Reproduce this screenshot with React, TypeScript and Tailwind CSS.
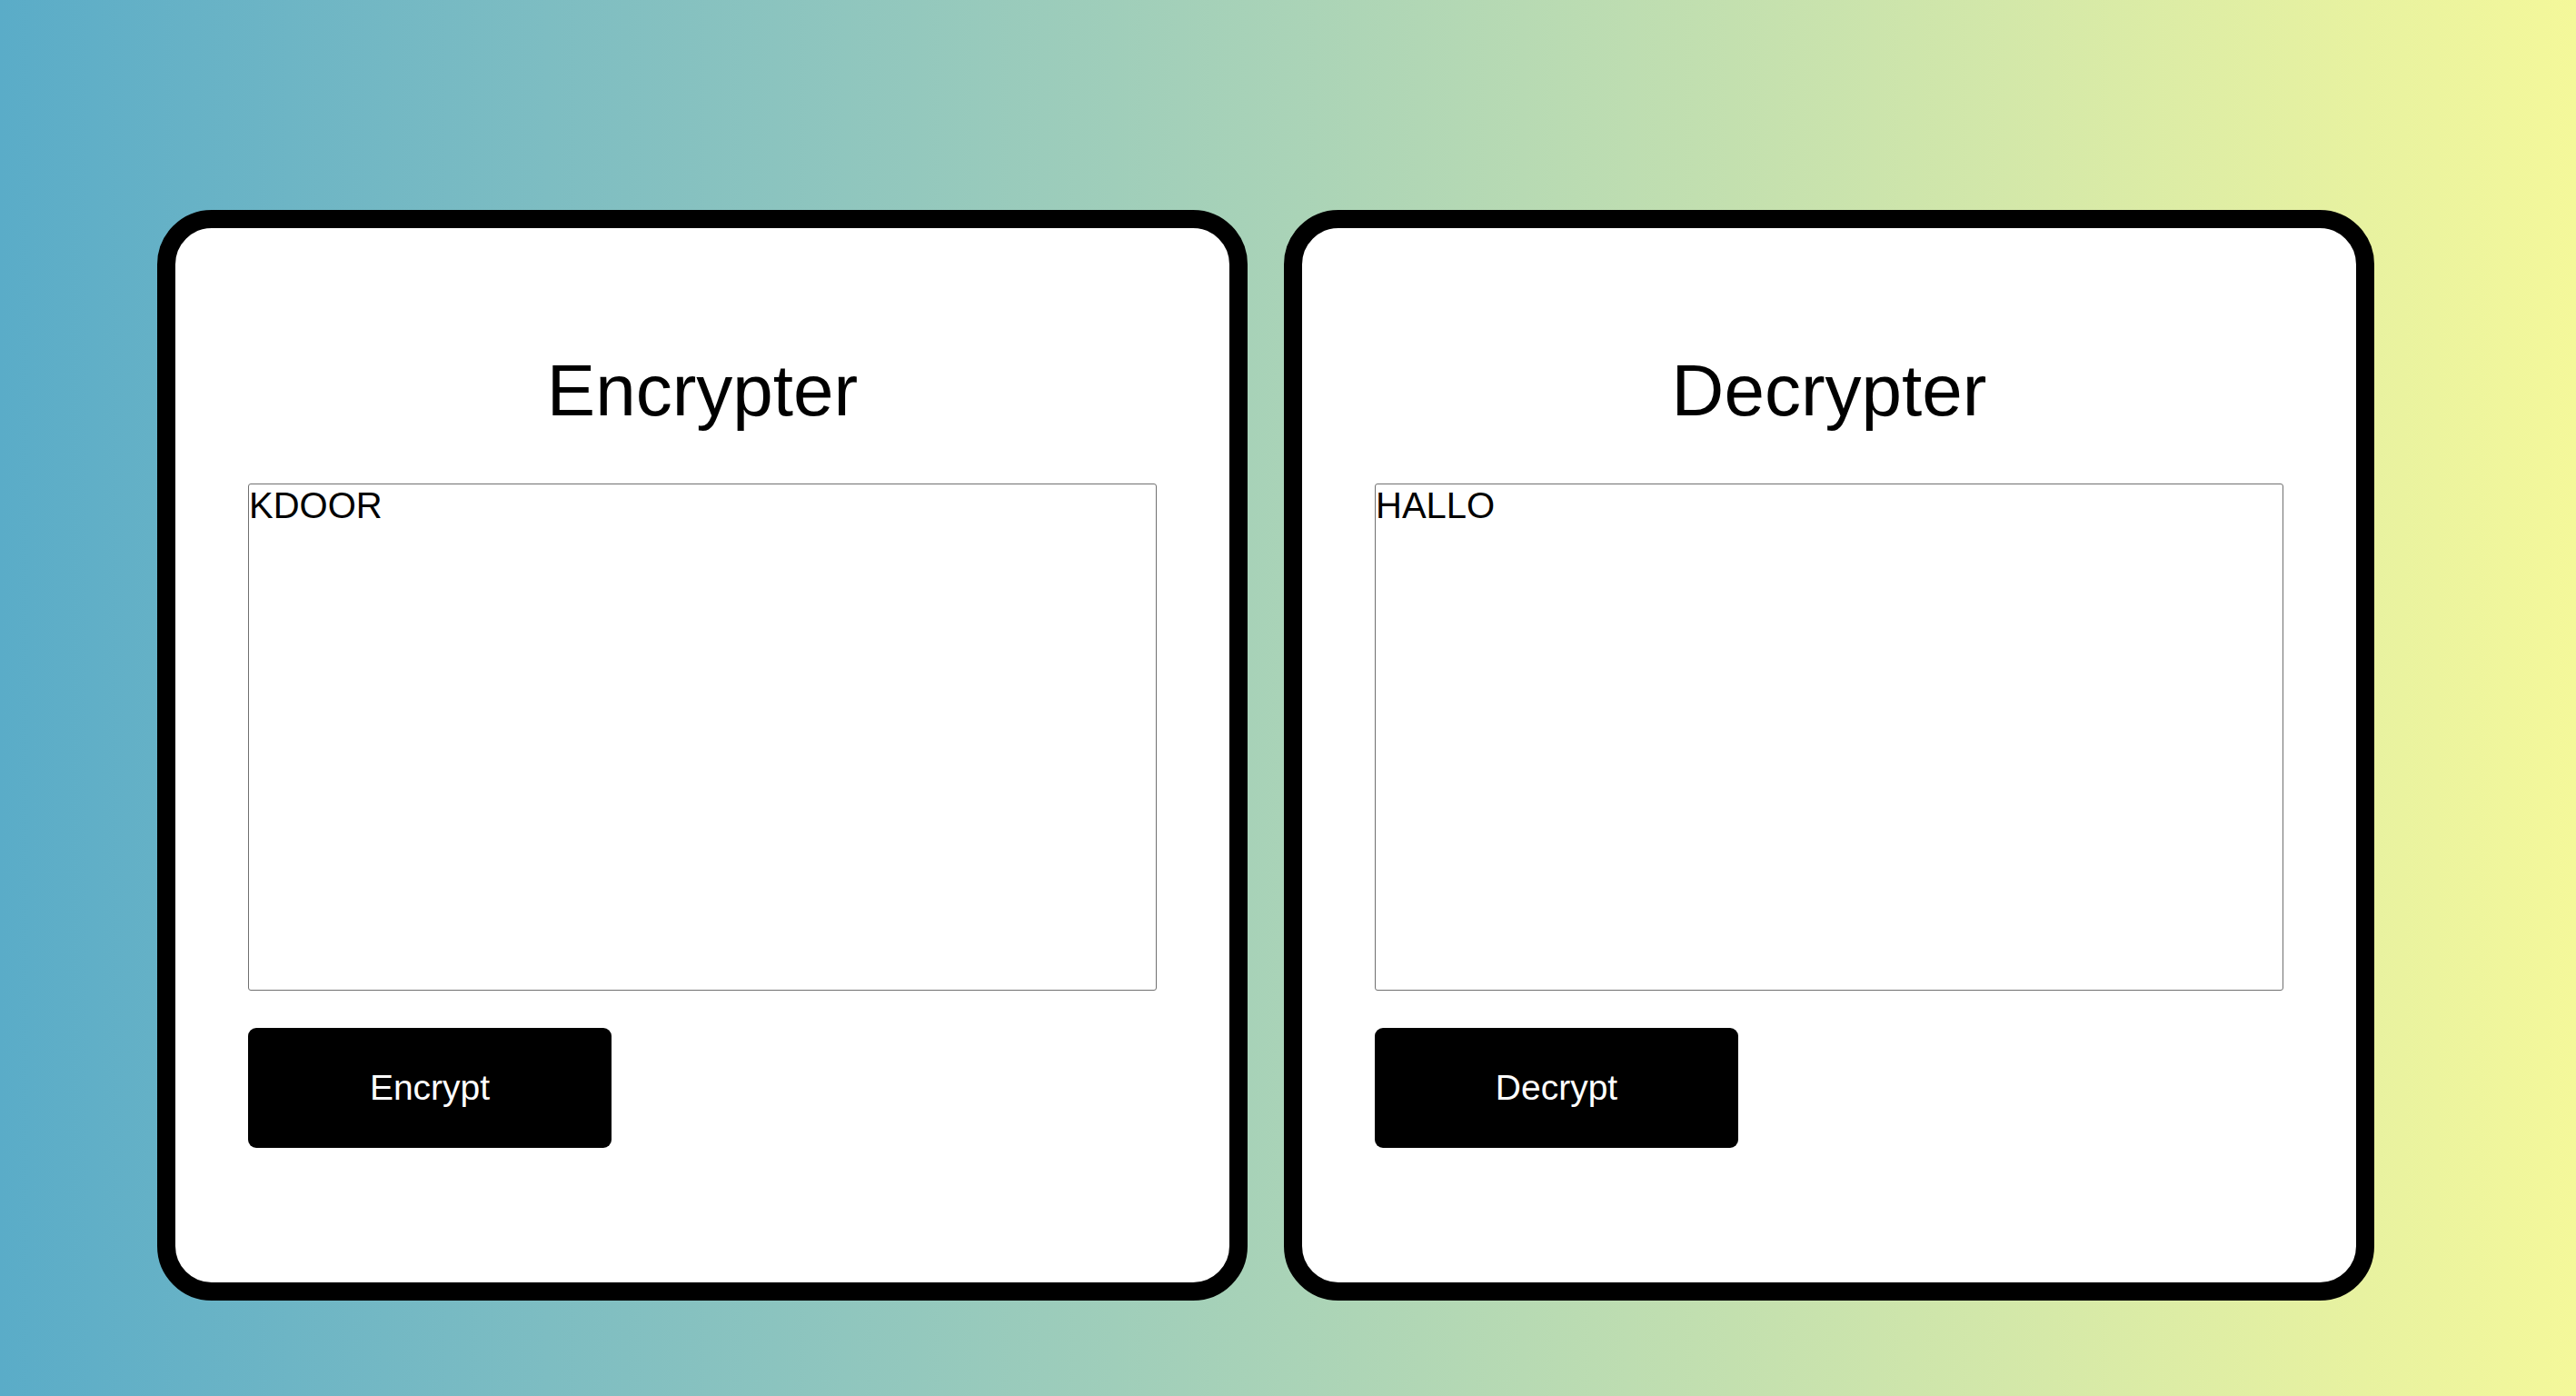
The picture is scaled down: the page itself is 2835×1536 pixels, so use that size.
import React, { useState } from 'react';

const shift = (text: string, n: number) =>
    text.replace(/[a-z]/gi, (c) => {
        const base = c <= 'Z' ? 65 : 97;
        return String.fromCharCode(((c.charCodeAt(0) - base + n + 26) % 26) + base);
    });

interface PanelProps {
    title: string;
    action: string;
    value: string;
    onChange: (v: string) => void;
    onRun: () => void;
}

const Panel: React.FC<PanelProps> = ({ title, action, value, onChange, onRun }) => (
    <div className="w-[1200px] h-[1200px] shrink-0 bg-white border-[20px] border-black rounded-[60px] px-[80px] pt-[132px] flex flex-col">
        <h1 className="text-[80px] leading-[94px] text-black text-center">{title}</h1>
        <textarea
            value={value}
            onChange={(e) => onChange(e.target.value)}
            className="mt-[55px] w-[1000px] h-[558px] border border-[#707070] rounded-[3px] text-[40px] leading-[46px] text-black resize-none outline-none p-0"
        />
        <button
            onClick={onRun}
            className="mt-[41px] w-[400px] h-[132px] bg-black text-white text-[39px] rounded-[9px]"
        >
            {action}
        </button>
    </div>
);

export default function App() {
    const [plain, setPlain] = useState('KDOOR');
    const [cipher, setCipher] = useState('HALLO');

    return (
        <div
            className="w-full min-h-screen bg-gradient-to-r from-[#5aacc8] to-[#f4f89a] pl-[173px] pt-[231px] flex gap-[40px]"
            style={{ fontFamily: '"Liberation Sans", Arial, sans-serif' }}
        >
            <Panel
                title="Encrypter"
                action="Encrypt"
                value={plain}
                onChange={setPlain}
                onRun={() => setPlain(shift(plain, 3))}
            />
            <Panel
                title="Decrypter"
                action="Decrypt"
                value={cipher}
                onChange={setCipher}
                onRun={() => setCipher(shift(cipher, -3))}
            />
        </div>
    );
}
